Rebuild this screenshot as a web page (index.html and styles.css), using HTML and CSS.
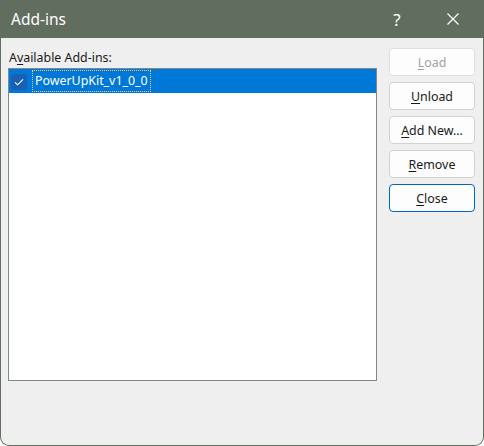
FILE: index.html
```html
<!DOCTYPE html>
<html>
<head>
<meta charset="utf-8">
<link rel="stylesheet" href="styles.css">
</head>
<body>
<div class="window">
  <div class="titlebar">
    <span class="title">Add-ins</span>
    <span class="help">?</span>
    <span class="close-x">
      <svg width="12" height="12" viewBox="0 0 12 12"><path d="M0.5 0.5 L11.5 11.5 M11.5 0.5 L0.5 11.5" stroke="#ffffff" stroke-width="1.2" fill="none"/></svg>
    </span>
  </div>
  <div class="content">
    <div class="left">
      <div class="label">A<u>v</u>ailable Add-ins:</div>
      <div class="listbox">
        <div class="row selected">
          <span class="check">
            <svg width="16" height="16" viewBox="0 0 16 16"><path d="M4 8.3 L6.6 10.8 L12 5.3" stroke="#ffffff" stroke-width="1.1" fill="none"/></svg>
          </span>
          <span class="item-text">PowerUpKit_v1_0_0</span>
        </div>
      </div>
    </div>
    <div class="buttons">
      <div class="btn disabled"><u>L</u>oad</div>
      <div class="btn"><u>U</u>nload</div>
      <div class="btn"><u>A</u>dd New...</div>
      <div class="btn"><u>R</u>emove</div>
      <div class="btn default"><u>C</u>lose</div>
    </div>
  </div>
</div>
</body>
</html>
```

FILE: styles.css
```css
html, body {
  margin: 0;
  padding: 0;
  background: #ffffff;
}
body {
  width: 484px;
  height: 446px;
  font-family: "Noto Sans", "Open Sans", sans-serif;
  font-size: 12.4px;
  color: #1a1a1a;
}
.window {
  width: 484px;
  height: 446px;
  box-sizing: border-box;
  background: #616d5f;
  border-radius: 0 0 9px 9px;
  display: flex;
  flex-direction: column;
  overflow: hidden;
}
.titlebar {
  height: 38px;
  flex: none;
  display: flex;
  align-items: center;
  color: #ffffff;
}
.title {
  font-size: 15.5px;
  margin-left: 11px;
  flex: 1;
}
.help {
  font-size: 17px;
  width: 12px;
  text-align: center;
  margin-right: 44px;
}
.close-x {
  width: 12px;
  height: 12px;
  margin-right: 25px;
  display: flex;
}
.content {
  flex: 1;
  background: #efefef;
  margin: 0 1px 1px 1px;
  border-radius: 0 0 8px 8px;
  display: flex;
  padding: 10px 8px 0 7px;
  gap: 12px;
}
.left {
  width: 369px;
  display: flex;
  flex-direction: column;
}
.label {
  height: 20px;
  line-height: 16px;
  padding-left: 1px;
  padding-top: 2px;
  box-sizing: border-box;
}
.label u, .btn u {
  text-decoration-thickness: 1px;
  text-underline-offset: 2px;
}
.listbox {
  height: 313px;
  box-sizing: border-box;
  border: 1px solid #82878a;
  background: #ffffff;
}
.row {
  height: 24px;
  display: flex;
  align-items: center;
}
.row.selected {
  background: #0078d7;
  color: #ffffff;
}
.check {
  width: 16px;
  height: 16px;
  margin-left: 2px;
  margin-top: 1px;
  background: #1a5fb4;
  border-radius: 3px;
  display: flex;
}
.item-text {
  margin-left: 6px;
  padding: 1px 2px;
  line-height: 18px;
  outline: 1px dotted #f0c890;
  outline-offset: 0px;
}
.buttons {
  width: 86px;
  display: flex;
  flex-direction: column;
  gap: 6px;
}
.btn {
  height: 28px;
  box-sizing: border-box;
  border: 1px solid #d2d2d2;
  border-radius: 4px;
  background: #fdfdfd;
  display: flex;
  align-items: center;
  justify-content: center;
}
.btn.disabled {
  color: #a0a0a0;
  border-color: #e0e0e0;
}
.btn.default {
  border-color: #0067c0;
}
```
